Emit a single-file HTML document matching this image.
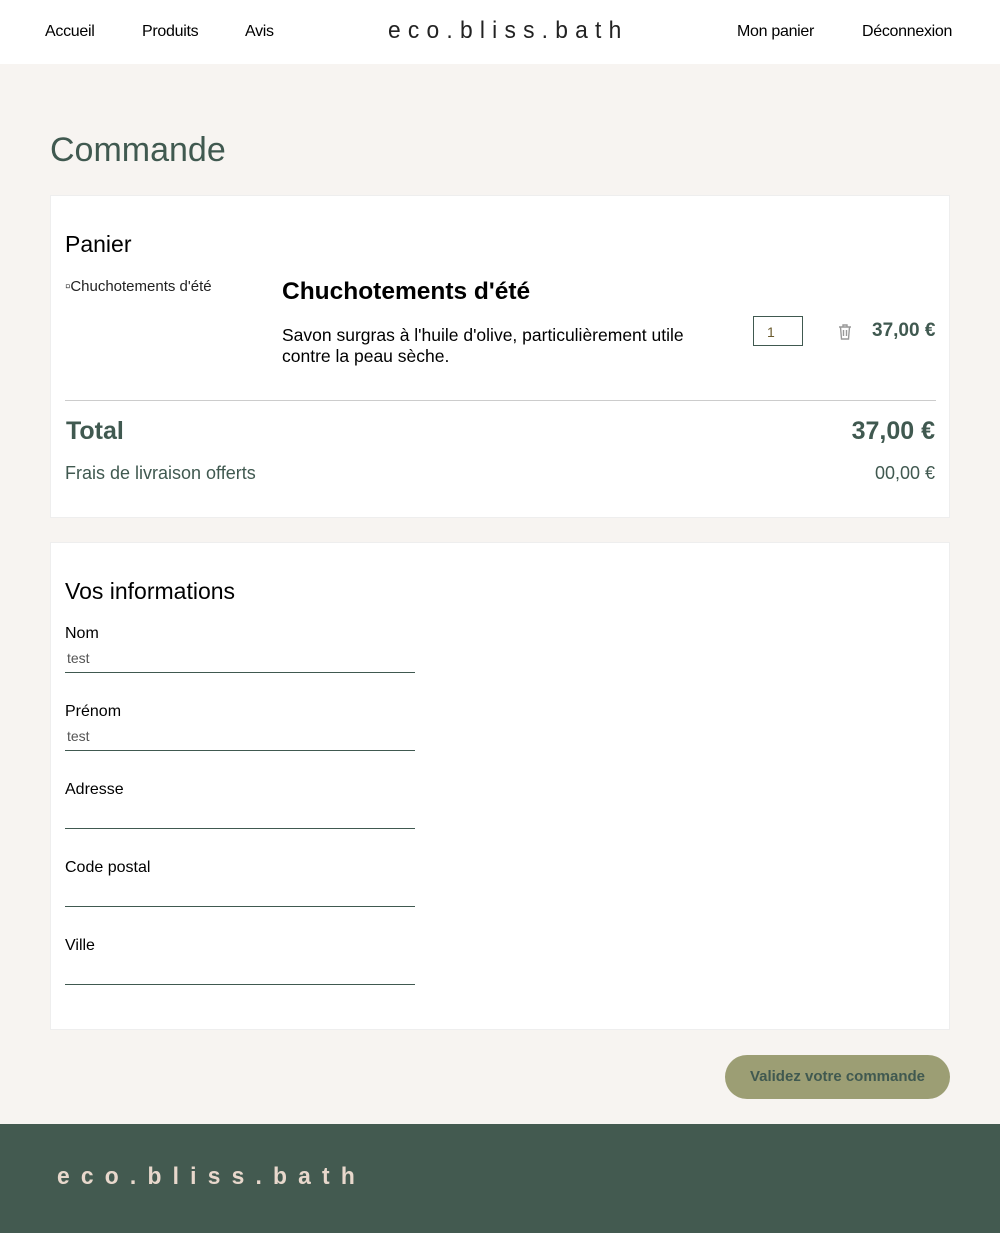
<!DOCTYPE html>
<html><head><meta charset="utf-8"><style>
*{margin:0;padding:0;box-sizing:border-box}
body{width:1000px;height:1233px;background:#f7f4f1;font-family:"Liberation Sans",sans-serif;color:#000;position:relative;overflow:hidden}
.hdr{position:absolute;top:0;left:0;width:1000px;height:64px;background:#fff}
.hdr a{position:absolute;top:23px;font-size:16px;color:#000;text-decoration:none;letter-spacing:-0.3px}
.logo{position:absolute;top:17px;left:388px;font-family:"Liberation Sans",sans-serif;font-size:24px;letter-spacing:7.6px;color:#222;white-space:nowrap;transform:scaleX(0.95);transform-origin:left}
h1{position:absolute;top:131px;left:50px;font-size:34px;font-weight:normal;color:#405950}
.card{position:absolute;left:50px;width:900px;background:#fff;border:1px solid #eee}
.abs{position:absolute}
.inp{position:absolute;left:14px;width:350px;border-bottom:1px solid #405950}
.lbl{position:absolute;left:14px;font-size:16px}
.val{position:absolute;left:16px;font-size:14px;color:#555}
</style></head><body>
<div class="hdr">
<a style="left:45px">Accueil</a><a style="left:142px">Produits</a><a style="left:245px">Avis</a>
<div class="logo">eco.bliss.bath</div>
<a style="left:737px">Mon panier</a><a style="left:862px">Déconnexion</a>
</div>
<h1>Commande</h1>
<div class="card" style="top:195px;height:323px">
<div class="abs" style="left:14px;top:35px;font-size:23px">Panier</div>
<div class="abs" style="left:14px;top:82px;font-size:15px;color:#222">▫Chuchotements d'été</div>
<div class="abs" style="left:231px;top:82px;font-size:24.5px;font-weight:bold">Chuchotements d'été</div>
<div class="abs" style="left:231px;top:129px;font-size:17.5px;line-height:21px;width:450px">Savon surgras à l'huile d'olive, particulièrement utile contre la peau sèche.</div>
<div class="abs" style="left:702px;top:120px;width:50px;height:30px;border:1px solid #405950;font-size:14px;color:#6b5b2e;padding:7px 0 0 13px">1</div>
<svg class="abs" style="left:787px;top:128px" width="14" height="16" viewBox="0 0 14 16"><path d="M1 3h12M5 3V1h4v2M2.5 3l1 12h7l1-12M5.5 6v6M8.5 6v6" fill="none" stroke="#999" stroke-width="1.4"/></svg>
<div class="abs" style="left:821px;top:124px;font-size:19px;font-weight:bold;color:#405950">37,00 €</div>
<div class="abs" style="left:14px;top:204px;width:871px;border-top:1px solid #ccc"></div>
<div class="abs" style="left:15px;top:221px;font-size:25px;font-weight:bold;color:#405950">Total</div>
<div class="abs" style="right:14px;top:221px;font-size:25px;font-weight:bold;color:#405950">37,00 €</div>
<div class="abs" style="left:14px;top:267px;font-size:18px;color:#405950">Frais de livraison offerts</div>
<div class="abs" style="right:14px;top:267px;font-size:18px;color:#405950">00,00 €</div>
</div>
<div class="card" style="top:542px;height:488px">
<div class="abs" style="left:14px;top:35px;font-size:23px">Vos informations</div>
<div class="lbl" style="top:82px">Nom</div><div class="val" style="top:107px">test</div><div class="inp" style="top:129px"></div>
<div class="lbl" style="top:160px">Prénom</div><div class="val" style="top:185px">test</div><div class="inp" style="top:207px"></div>
<div class="lbl" style="top:238px">Adresse</div><div class="inp" style="top:285px"></div>
<div class="lbl" style="top:316px">Code postal</div><div class="inp" style="top:363px"></div>
<div class="lbl" style="top:394px">Ville</div><div class="inp" style="top:441px"></div>
</div>
<div class="abs" style="left:725px;top:1055px;width:225px;height:44px;border-radius:22px;background:#9c9e74;color:#405950;font-size:15px;font-weight:bold;text-align:center;line-height:44px">Validez votre commande</div>
<div class="abs" style="left:0;top:1124px;width:1000px;height:109px;background:#435a50"></div>
<div class="abs" style="left:57px;top:1163px;font-size:24px;font-weight:bold;letter-spacing:11.8px;color:#e8d8cc;white-space:nowrap;transform:scaleX(0.95);transform-origin:left">eco.bliss.bath</div>
</body></html>
